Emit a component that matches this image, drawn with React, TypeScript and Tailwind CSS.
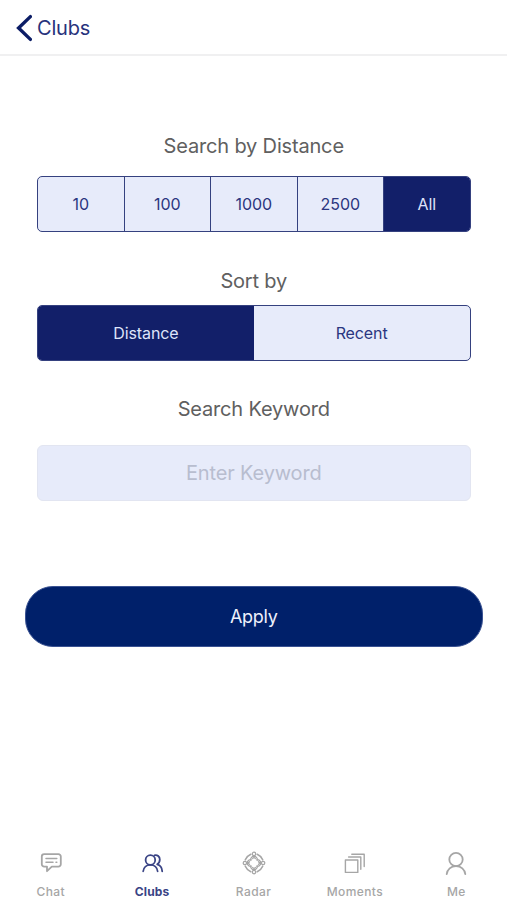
import React, { useState } from 'react';
import { clsx } from 'clsx';

const DISTANCES = ['10', '100', '1000', '2500', 'All'];
const SORTS = ['Distance', 'Recent'];

const iconProps = {
  width: 26,
  height: 26,
  viewBox: '0 0 26 26',
  fill: 'none',
  stroke: 'currentColor',
  strokeLinecap: 'round' as const,
  strokeLinejoin: 'round' as const,
};

function ChatIcon() {
  return (
    <svg {...iconProps} strokeWidth={1.8}>
      <path d="M6.2 4.2h14.2a2.4 2.4 0 0 1 2.4 2.4v7.6a2.4 2.4 0 0 1-2.4 2.4h-6.6L9 21.2v-4.6H6.2a2.4 2.4 0 0 1-2.4-2.4V6.6a2.4 2.4 0 0 1 2.4-2.4z" />
      <path d="M8 8.6h10.8M8 12.2h7M18 12.2h.8" strokeWidth={1.5} />
    </svg>
  );
}

function ClubsIcon() {
  return (
    <svg {...iconProps} strokeWidth={1.8}>
      <circle cx="11.4" cy="10" r="4.8" />
      <path d="M4.2 21.3c.3-4 3.3-6.5 7.2-6.5s6.9 2.5 7.2 6.5" />
      <path d="M15.4 5.3c3-.8 5.4 1.4 5.4 4.3 0 2.2-1 3.9-2.6 4.8 3 .8 4.8 3.3 5 6.9" />
    </svg>
  );
}

function RadarIcon() {
  return (
    <svg {...iconProps} strokeWidth={1.2}>
      {[0, 90, 180, 270].map((angle) => (
        <g key={angle} transform={`rotate(${angle} 13 13)`}>
          <circle cx="13" cy="3.9" r="1.7" />
          <path d="M9.8 10.2V8.4l1.7-1.9h3l1.7 1.9v1.8M11.6 8.6 13 7.4l1.4 1.2" />
          <path d="M16.2 4.3c2.4 1 4.4 3 5.5 5.5" strokeWidth={1.6} />
        </g>
      ))}
    </svg>
  );
}

function MomentsIcon() {
  return (
    <svg {...iconProps} strokeWidth={1.4}>
      <rect x="3.4" y="10" width="12.4" height="12.4" />
      <path d="M6.6 7h12.2v12.2M9.8 4.2h12.4v12.4" />
    </svg>
  );
}

function MeIcon() {
  return (
    <svg {...iconProps} strokeWidth={1.8}>
      <circle cx="13" cy="9.5" r="6.7" />
      <path d="M3.7 24.2c.5-4.8 4.3-8 9.3-8s8.8 3.2 9.3 8" />
    </svg>
  );
}

const TABS = [
  { label: 'Chat', Icon: ChatIcon },
  { label: 'Clubs', Icon: ClubsIcon },
  { label: 'Radar', Icon: RadarIcon },
  { label: 'Moments', Icon: MomentsIcon },
  { label: 'Me', Icon: MeIcon },
];

interface SegmentedProps {
  options: string[];
  value: string;
  onChange: (value: string) => void;
}

function Segmented({ options, value, onChange }: SegmentedProps) {
  return (
    <div className="flex h-14 overflow-hidden rounded-[5px] border border-[#35417f] bg-[#e7ebfa]">
      {options.map((option, i) => (
        <button
          key={option}
          type="button"
          onClick={() => onChange(option)}
          className={clsx(
            'flex-1 basis-0 text-base tracking-[-0.1px]',
            i > 0 && value !== options[i - 1] && 'border-l border-[#35417f]',
            value === option ? 'bg-[#121f69] text-[#dfe4fa]' : 'text-[#2b3680]'
          )}
        >
          {option}
        </button>
      ))}
    </div>
  );
}

function Heading({ children }: { children: React.ReactNode }) {
  return <h2 className="text-center text-xl leading-7 tracking-[-0.17px] text-[#606060]">{children}</h2>;
}

export default function App() {
  const [distance, setDistance] = useState('All');
  const [sort, setSort] = useState('Distance');
  const [keyword, setKeyword] = useState('');
  const [tab, setTab] = useState('Clubs');

  return (
    <div className="flex h-[900px] w-full flex-col bg-white font-['Inter',sans-serif]">
      <header className="flex h-[55.5px] shrink-0 items-center border-b-2 border-[#f0f0f1] pl-4 pt-0.5">
        <button type="button" className="flex items-center gap-[5px] text-[#27327c]">
          <svg width="16" height="28" viewBox="0 0 16 28" fill="none" stroke="#0c1d66" strokeWidth="3.4">
            <path d="M14.4 2.6 2.6 14l11.8 11.4" strokeLinecap="round" />
          </svg>
          <span className="text-xl tracking-[-0.2px]">Clubs</span>
        </button>
      </header>

      <main className="flex flex-1 flex-col pl-[37px] pr-[36.5px]">
        <div className="mb-[16.5px] mt-[76px]">
          <Heading>Search by Distance</Heading>
        </div>
        <Segmented options={DISTANCES} value={distance} onChange={setDistance} />

        <div className="mb-[10px] mt-[35px]">
          <Heading>Sort by</Heading>
        </div>
        <Segmented options={SORTS} value={sort} onChange={setSort} />

        <div className="mb-[22px] mt-[34px]">
          <Heading>Search Keyword</Heading>
        </div>
        <input
          value={keyword}
          onChange={(e) => setKeyword(e.target.value)}
          placeholder="Enter Keyword"
          className="h-14 w-full rounded-md border border-[#e2e5f1] bg-[#e7ebfa] text-center text-xl tracking-[-0.15px] text-[#2b3680] placeholder:text-[#b8bdcf]"
        />

        <button
          type="button"
          className="-mx-3 mt-[85px] h-[61px] rounded-[28px] border border-[#3a5292] bg-[#00206a] text-lg tracking-[-0.3px] text-[#eef1fb]"
        >
          Apply
        </button>
      </main>

      <nav className="flex h-[50px] shrink-0">
        {TABS.map(({ label, Icon }) => (
          <button
            key={label}
            type="button"
            onClick={() => setTab(label)}
            className={clsx(
              'flex flex-1 basis-0 flex-col items-center text-xs',
              tab === label
                ? 'font-bold tracking-[0.2px] text-[#3a4485]'
                : 'font-medium tracking-[0.4px] text-[#a6a6a6]'
            )}
          >
            <Icon />
            <span className="mt-2 leading-4">{label}</span>
          </button>
        ))}
      </nav>
    </div>
  );
}
